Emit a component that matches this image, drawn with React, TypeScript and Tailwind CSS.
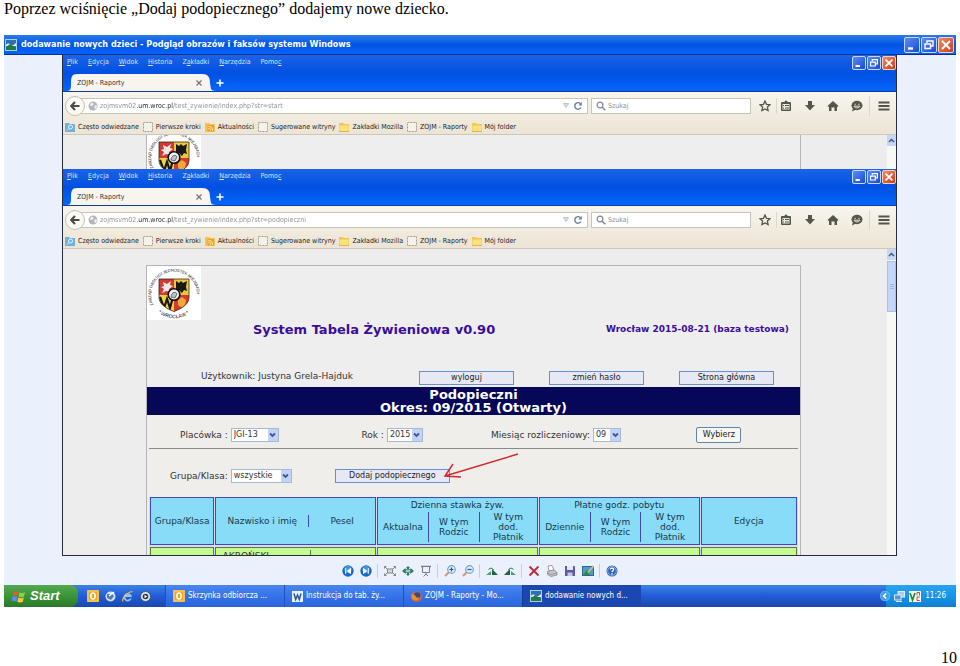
import { useId, type ReactNode } from "react";

const MENU = [
  { pre: "", key: "P", post: "lik" },
  { pre: "", key: "E", post: "dycja" },
  { pre: "", key: "W", post: "idok" },
  { pre: "", key: "H", post: "istoria" },
  { pre: "Z", key: "a", post: "kładki" },
  { pre: "", key: "N", post: "arzędzia" },
  { pre: "Pomo", key: "c", post: "" },
];

const BOOKMARKS = [
  { icon: "visited", label: "Często odwiedzane" },
  { icon: "blank", label: "Pierwsze kroki" },
  { icon: "feed", label: "Aktualności" },
  { icon: "blank", label: "Sugerowane witryny" },
  { icon: "folder", label: "Zakładki Mozilla" },
  { icon: "blank", label: "ZOJM - Raporty" },
  { icon: "folder", label: "Mój folder" },
];

/* ---------- Window controls ---------- */

function WindowButtons({ large = false }: { large?: boolean }) {
  const size = large ? "w-4 h-4" : "w-[14px] h-[14px]";
  const blue = "rounded-[2px] border border-[#c4d8fb] bg-linear-to-br from-[#5b8df5] to-[#1a49cf]";
  return (
    <div className={large ? "flex gap-px" : "flex gap-px pt-px"}>
      <button aria-label="Minimalizuj" className={`${size} ${blue}`}>
        <svg viewBox="0 0 14 14" className="block w-full h-full">
          <path d="M3 10.5h5" stroke="#fff" strokeWidth="2.4" />
        </svg>
      </button>
      <button aria-label="Przywróć" className={`${size} ${blue}`}>
        <svg viewBox="0 0 14 14" className="block w-full h-full" fill="none" stroke="#fff">
          <path d="M5 5V3h6v5H9" strokeWidth="1.4" />
          <path d="M3 6h5.5v4.5H3z" strokeWidth="1.4" />
        </svg>
      </button>
      <button
        aria-label="Zamknij"
        className={`${size} rounded-[2px] border border-[#f3d3c6] bg-linear-to-br from-[#ee8a66] to-[#cc3a12]`}
      >
        <svg viewBox="0 0 14 14" className="block w-full h-full">
          <path d="M3 3l8 8M11 3l-8 8" stroke="#fff" strokeWidth="2" />
        </svg>
      </button>
    </div>
  );
}

function PictureIcon() {
  return (
    <svg viewBox="0 0 12 12" className="w-3 h-3 shrink-0">
      <rect x="0.5" y="0.5" width="11" height="11" fill="#2f6fb0" stroke="#a9d3d8" />
      <path d="M1 6c2-3 4-1 5 0s3 0 5-2v3H1z" fill="#e9f6f4" />
      <path d="M1 8l4-3 6 4v2H1z" fill="#1f7a46" />
    </svg>
  );
}

/* ---------- Browser chrome ---------- */

function BookmarkIcon({ icon }: { icon: string }) {
  if (icon === "blank") {
    return (
      <svg viewBox="0 0 10 10" className="w-[10px] h-[10px]">
        <rect x="0.5" y="0.5" width="9" height="9" fill="#f5f2e9" stroke="#a29e90" strokeDasharray="2 1" />
      </svg>
    );
  }
  if (icon === "visited") {
    return (
      <svg viewBox="0 0 10 10" className="w-[10px] h-[10px]">
        <path d="M0 1h4l1 1h5v8H0z" fill="#6fb1de" />
        <circle cx="5.5" cy="5" r="2" fill="none" stroke="#e7f4fd" />
        <path d="M4 6.500L2 8.500" stroke="#e7f4fd" />
      </svg>
    );
  }
  if (icon === "feed") {
    return (
      <svg viewBox="0 0 10 10" className="w-[10px] h-[10px]">
        <path d="M0 1h4l1 1h5v8H0z" fill="#f3c452" />
        <rect x="2.500" y="3" width="6.500" height="6.500" fill="#f0a02c" />
        <path d="M3.500 4.500c2.500 0 4 1.500 4 4M3.500 6.500c1.200 0 2 .8 2 2" fill="none" stroke="#fff3d6" />
      </svg>
    );
  }
  return (
    <svg viewBox="0 0 10 10" className="w-[10px] h-[10px]">
      <path d="M0 1h4l1 1h5v8H0z" fill="#efc650" />
      <path d="M.5 3.500h9v6h-9z" fill="#fbe07e" />
      <path d="M0 9.600h10" stroke="#d9a93a" strokeWidth=".8" />
    </svg>
  );
}

function ToolbarIcons() {
  return (
    <div className="flex items-center text-[#55554a] mr-[6px]">
      <button aria-label="Dodaj zakładkę" className="ml-2">
        <svg viewBox="0 0 12 12" className="w-3 h-3" fill="none" stroke="currentColor" strokeWidth="1.3">
          <path d="M6 1l1.500 3.300 3.500.4-2.600 2.400.7 3.500L6 8.900l-3.100 1.700.7-3.500L1 4.700l3.500-.4z" />
        </svg>
      </button>
      <span className="w-px h-4 bg-[#dcd9cc] ml-[5px] mr-[3px]" />
      <button aria-label="Zakładki">
        <svg viewBox="0 0 12 12" className="w-3 h-3">
          <path d="M4.500 2a1.500 1.500 0 013 0H10a1 1 0 011 1V10a1 1 0 01-1 1H2a1 1 0 01-1-1V3a1 1 0 011-1z" fill="currentColor" />
          <path d="M2.500 4h7v5.500h-7z" fill="#efede2" />
          <path d="M3 5.500h1M5 5.500h4M3 8h1M5 8h4" stroke="currentColor" />
        </svg>
      </button>
      <button aria-label="Pobrane" className="ml-3">
        <svg viewBox="0 0 12 12" className="w-3 h-3">
          <path d="M4 1h4v4h3l-5 5.500L1 5h3z" fill="currentColor" />
        </svg>
      </button>
      <button aria-label="Strona startowa" className="ml-[11px]">
        <svg viewBox="0 0 12 12" className="w-3 h-3">
          <path d="M6 1l5.500 5-1 1L10 6.500V11H7.500V7.500h-3V11H2V6.500L1.500 7l-1-1z" fill="currentColor" />
        </svg>
      </button>
      <button aria-label="Czat" className="ml-3">
        <svg viewBox="0 0 12 12" className="w-3 h-3">
          <ellipse cx="6" cy="5.500" rx="5.500" ry="4.700" fill="currentColor" />
          <path d="M2 8L1 11.500 5 9.500z" fill="currentColor" />
          <path d="M3.500 4.300h1.300M7.200 4.300h1.300M3 6.200c1 2.200 5 2.200 6 0z" stroke="#efede2" strokeWidth=".9" fill="none" />
        </svg>
      </button>
      <span className="w-px h-5 bg-[#dcd9cc] ml-[6px] mr-2" />
      <button aria-label="Menu">
        <svg viewBox="0 0 12 12" className="w-3 h-3">
          <path d="M.5 2.500h11M.5 6h11M.5 9.500h11" stroke="currentColor" strokeWidth="1.900" />
        </svg>
      </button>
    </div>
  );
}

function BrowserChrome({ url }: { url: string }) {
  return (
    <div className="font-['DejaVu_Sans_Condensed','DejaVu_Sans',sans-serif] text-[7px] leading-[10px]">
      <div className="bg-linear-to-b from-[#1b63e6] via-[#0150e2] to-[#0465fb] border-b border-[#0a3fa8]">
        <div className="flex justify-between items-start h-[19px]">
          <nav className="flex gap-[10px] pl-1 pt-[2px] text-[#d4e4ff]">
            {MENU.map((m) => (
              <button key={m.pre + m.key}>
                {m.pre}
                <u>{m.key}</u>
                {m.post}
              </button>
            ))}
          </nav>
          <WindowButtons />
        </div>
        <div className="flex items-center h-[17px] pl-1">
          <div className="flex h-full">
            <svg viewBox="0 0 10 17" className="w-[10px] h-full">
              <path d="M0 17c4 0 4-3 4-8 0-6 1-9 6-9v17z" fill="#f7f5ee" />
            </svg>
            <div className="flex items-center justify-between w-[125px] bg-[#f7f5ee] text-[#333]">
              <span>ZOJM - Raporty</span>
              <button aria-label="Zamknij kartę">
                <svg viewBox="0 0 6 6" className="w-[6px] h-[6px]">
                  <path d="M.5.5l5 5M5.500.5l-5 5" stroke="#777" strokeWidth="1.300" />
                </svg>
              </button>
            </div>
            <svg viewBox="0 0 14 17" className="w-[14px] h-full">
              <path d="M14 17c-6 0-5-3-6-8 0-6-2-9-8-9v17z" fill="#f7f5ee" />
            </svg>
          </div>
          <button aria-label="Nowa karta">
            <svg viewBox="0 0 8 8" className="w-2 h-2">
              <path d="M4 .5v7M.5 4h7" stroke="#fff" strokeWidth="1.600" />
            </svg>
          </button>
        </div>
      </div>

      <div className="bg-linear-to-b from-[#f7f5ee] to-[#ece4d4] border-b border-[#cfc8b8]">
        <div className="flex items-center h-[27px] pl-[2px]">
          <button
            aria-label="Wstecz"
            className="flex items-center justify-center w-5 h-5 rounded-full border border-[#c4c0b0] bg-[#faf9f4] z-10"
          >
            <svg viewBox="0 0 10 10" className="w-[10px] h-[10px]">
              <path d="M9.500 5H1.500M5 1L1.200 5 5 9" stroke="#4c4c44" strokeWidth="2.200" fill="none" />
            </svg>
          </button>
          <div className="flex items-center grow h-4 bg-white border border-[#c9c5b6] -ml-1 pl-[6px] pr-1">
            <svg viewBox="0 0 10 10" className="w-[10px] h-[10px] shrink-0">
              <circle cx="5" cy="5" r="4.500" fill="#b3b6b9" />
              <path d="M2 3l2-1.500L6 3 4 5 2.500 5zM6 5l2.500-1 .5 2-2 2.500z" fill="#eceeef" />
            </svg>
            <input
              aria-label="Adres"
              defaultValue={url}
              className="grow min-w-0 ml-[2px] outline-none text-transparent bg-clip-text bg-[linear-gradient(90deg,#8c8c8c_37px,#222_37px,#222_73px,#8c8c8c_73px)]"
            />
            <svg viewBox="0 0 6 5" className="w-[6px] h-[5px]">
              <path d="M.5.5h5L3 4.500z" fill="#dde3ea" stroke="#b0b8c2" strokeWidth=".8" />
            </svg>
            <button aria-label="Odśwież" className="ml-1">
              <svg viewBox="0 0 10 10" className="w-[10px] h-[10px]">
                <path d="M8 6.500A3.300 3.300 0 118 3.300" fill="none" stroke="#6880a3" strokeWidth="1.400" />
                <path d="M8.800 1v3.500H5.300z" fill="#6880a3" />
              </svg>
            </button>
          </div>
          <div className="flex items-center w-[160px] h-4 bg-white border border-[#c9c5b6] ml-[3px] pl-1 shrink-0">
            <svg viewBox="0 0 10 10" className="w-[10px] h-[10px] shrink-0" fill="none" stroke="#7d8a99">
              <circle cx="4" cy="4" r="2.900" strokeWidth="1.200" />
              <path d="M6 6l3.300 3.300" strokeWidth="1.600" />
            </svg>
            <input
              aria-label="Szukaj"
              placeholder="Szukaj"
              className="grow min-w-0 ml-[2px] outline-none placeholder:text-[#8d8d8d]"
            />
          </div>
          <ToolbarIcons />
        </div>
        <div className="flex items-center h-[15px] pl-[2px] gap-1 text-[#222]">
          {BOOKMARKS.map((b) => (
            <a key={b.label} href="#" className="flex items-center gap-[3px] whitespace-nowrap">
              <BookmarkIcon icon={b.icon} />
              {b.label}
            </a>
          ))}
        </div>
      </div>
    </div>
  );
}

function Scrollbar({ thumb = false }: { thumb?: boolean }) {
  return (
    <div className="w-[9px] shrink-0 bg-[#f8f8f4]">
      <button aria-label="Przewiń w górę" className="flex items-center justify-center w-full h-[11px] bg-[#c6d5f8]">
        <svg viewBox="0 0 7 5" className="w-[7px] h-[5px]">
          <path d="M1 4l2.500-2.500L6 4" stroke="#46587f" strokeWidth="1.500" fill="none" />
        </svg>
      </button>
      {thumb && (
        <div className="flex items-center justify-center h-[51px] mt-px bg-[#c6d5fa] border border-[#a9bff0]">
          <svg viewBox="0 0 4 6" className="w-1 h-[6px]">
            <path d="M0 .5h4M0 2.500h4M0 4.500h4" stroke="#9bb2ea" />
          </svg>
        </div>
      )}
    </div>
  );
}

/* ---------- Office emblem ---------- */

function Emblem() {
  const id = useId();
  return (
    <svg viewBox="0 0 54 54" className="block w-[54px] h-[54px] bg-white">
      <defs>
        <path id={`${id}t`} d="M6.500 39A23 23 0 1 1 47.500 39" />
        <path id={`${id}b`} d="M11 46.500A25.500 25.500 0 0 0 45 45" />
        <clipPath id={`${id}s`}>
          <path d="M12 13h30v18c0 7-6 11-15 14.500C18 42 12 38 12 31z" />
        </clipPath>
      </defs>
      <g fontFamily="Liberation Sans, sans-serif" fill="#111">
        <text fontSize="4">
          <textPath href={`#${id}t`}>ZARZĄD OBSŁUGI JEDNOSTEK MIEJSKICH</textPath>
        </text>
        <text fontSize="5">
          <textPath href={`#${id}b`}>* WROCŁAW *</textPath>
        </text>
      </g>
      <g clipPath={`url(#${id}s)`}>
        <path d="M12 13h15v16H12z" fill="#cf3a36" />
        <path d="M27 13h15v16H27z" fill="#ecc93c" />
        <path d="M12 29h15v18H12z" fill="#f0d23f" />
        <path d="M27 29h15v18H27z" fill="#d5382c" />
        <path d="M15 27l2-4-3-2 3-1-1-4 4 2 4-3-1 4 3 1-4 3 1 3-4-1z" fill="#f3e6e4" />
        <path d="M29 15l3 2 2-2 2 2 4-2-1 6 1 4-3-1-2 3-3-3-3 1z" fill="#191919" />
        <path d="M13 31l4 11 3-9 3 9 3-11" fill="none" stroke="#161616" strokeWidth="2.200" />
        <path d="M31 34l4-3 4 3-1 5-3 3-4-3z" fill="#eca93a" />
        <circle cx="27" cy="28.500" r="5.800" fill="#f4f4f4" stroke="#111" strokeWidth="1.600" />
        <path d="M24 31c0-5 5-6 6-3l-2 4z" fill="#b9c0c7" stroke="#222" strokeWidth=".6" />
      </g>
      <path d="M12 13h30v18c0 7-6 11-15 14.500C18 42 12 38 12 31z" fill="none" stroke="#3a2a18" strokeWidth=".8" />
    </svg>
  );
}

/* ---------- Application page ---------- */

function Field({ label, value, width }: { label: string; value: string; width: string }) {
  const id = useId();
  return (
    <div className="flex items-center gap-[3px]">
      <label htmlFor={id} className="whitespace-nowrap">{label}</label>
      <div className="relative">
        <select
          id={id}
          className={`${width} block h-[14px] appearance-none bg-white border border-[#a5b8d6] pl-[2px] text-[8px] leading-3 font-['DejaVu_Sans',sans-serif]`}
        >
          <option>{value}</option>
        </select>
        <span className="absolute right-px top-px bottom-px w-[10px] bg-[#c3d3f8] flex items-center justify-center pointer-events-none">
          <svg viewBox="0 0 7 6" className="w-[7px] h-[6px]">
            <path d="M1 1.500L3.500 4 6 1.500" stroke="#3b5698" strokeWidth="1.800" fill="none" />
          </svg>
        </span>
      </div>
    </div>
  );
}

function FlatButton({ children, width }: { children: ReactNode; width: string }) {
  return (
    <button className={`${width} h-[14px] text-[8px] leading-3 border border-[#6a8fd0] bg-[#e6e9f3] text-[#222] whitespace-nowrap`}>
      {children}
    </button>
  );
}

const TH = "relative h-12 p-0 border border-[#3c4bb8] bg-[#89dcf8] font-normal text-[#15384c]";
const TD = "h-2 p-0 border border-b-0 border-[#5a7a3c] bg-[#c4fb91]";

function SplitHeading({ title, first }: { title: string; first: string }) {
  return (
    <div className="flex flex-col h-full">
      <span className="leading-[14px]">{title}</span>
      <div className="grid grid-cols-[32fr_32fr_36fr] grow mb-[2px] divide-x divide-[#3c4bb8] leading-[10px]">
        <span className="flex items-center justify-center">{first}</span>
        <span className="flex items-center justify-center">
          W tym
          <br />
          Rodzic
        </span>
        <span className="flex items-center justify-center">
          W tym
          <br />
          dod.
          <br />
          Płatnik
        </span>
      </div>
    </div>
  );
}

function WardsTable() {
  return (
    <table className="w-full table-fixed border-separate border-spacing-x-px border-spacing-y-0 bg-[#d9d9f5] text-center">
      <colgroup>
        <col className="w-[10%]" />
        <col className="w-[25%]" />
        <col className="w-[25%]" />
        <col className="w-[25%]" />
        <col className="w-[15%]" />
      </colgroup>
      <thead>
        <tr>
          <th className={TH}>Grupa/Klasa</th>
          <th className={TH}>
            <div className="grid grid-cols-[93fr_66fr] divide-x divide-[#3c4bb8] leading-3">
              <span>Nazwisko i imię</span>
              <span>Pesel</span>
            </div>
          </th>
          <th className={TH}>
            <SplitHeading title="Dzienna stawka żyw." first="Aktualna" />
          </th>
          <th className={TH}>
            <SplitHeading title="Płatne godz. pobytu" first="Dziennie" />
          </th>
          <th className={TH}>Edycja</th>
        </tr>
      </thead>
      <tbody>
        <tr>
          <td colSpan={5} className="h-[2px] p-0" />
        </tr>
        <tr>
          <td className={TD} />
          <td className={TD}>
            <div className="flex h-[7px] overflow-hidden">
              <span className="w-[95px] leading-[12px] border-r border-[#5a7a3c] pr-[35px] mt-[2px]">AKROŃSKI</span>
            </div>
          </td>
          <td className={TD} />
          <td className={TD} />
          <td className={TD} />
        </tr>
      </tbody>
    </table>
  );
}

function ApplicationPage() {
  return (
    <div className="flex bg-[#ededed] text-[9px] leading-[10px] text-[#333] font-['DejaVu_Sans',Verdana,sans-serif]">
      <div className="grow pt-4 pl-[83px] pr-[86px]">
        <div className="border border-b-0 border-[#b4b4b4] bg-[#eeeeee]">
          <Emblem />
          <div className="flex justify-between pl-[106px] pr-[11px] text-[#3a0d9c] font-bold">
            <h1 className="text-[13px] leading-5">System Tabela Żywieniowa v0.90</h1>
            <p className="text-[9px] leading-[18px]">Wrocław 2015-08-21 (baza testowa)</p>
          </div>
          <div className="flex justify-between pl-[54px] pr-[26px] pt-[31px] pb-[2px]">
            <span>Użytkownik: Justyna Grela-Hajduk</span>
            <div className="flex gap-[35px]">
              <FlatButton width="w-[95px]">wyloguj</FlatButton>
              <FlatButton width="w-[95px]">zmień hasło</FlatButton>
              <FlatButton width="w-[95px]">Strona główna</FlatButton>
            </div>
          </div>
          <h2 className="bg-[#070757] text-white text-center font-bold text-[13px] leading-[13px] py-px">
            Podopieczni
            <br />
            Okres: 09/2015 (Otwarty)
          </h2>
          <div className="bg-[#f0eeea] px-[2px]">
            <div className="grid grid-cols-[182fr_130fr_206fr_102fr] items-center pl-[31px] pt-[12px] pb-[5px] border-b border-[#8a8a8a]">
              <Field label="Placówka :" value="JGI-13" width="w-12" />
              <Field label="Rok :" value="2015" width="w-9" />
              <Field label="Miesiąc rozliczeniowy:" value="09" width="w-7" />
              <div>
                <button className="w-[45px] h-4 text-[8px] leading-3 border border-[#5f86ac] rounded-[2px] bg-[#f7f6f1] text-[#222]">
                  Wybierz
                </button>
              </div>
            </div>
            <div className="flex items-center gap-[43px] pl-[21px] pt-5 pb-[14px]">
              <Field label="Grupa/Klasa:" value="wszystkie" width="w-[61px]" />
              <div className="relative">
                <FlatButton width="w-[115px]">Dodaj podopiecznego</FlatButton>
                <svg
                  viewBox="0 0 80 34"
                  className="absolute left-[106px] -top-[19px] w-20 h-[34px] pointer-events-none"
                  fill="none"
                  stroke="#d02a30"
                  strokeWidth="1.500"
                >
                  <path d="M77 4L4 26M12 14L4 26L20 27" />
                </svg>
              </div>
            </div>
            <WardsTable />
          </div>
        </div>
      </div>
      <Scrollbar thumb />
    </div>
  );
}

/* ---------- Picture viewer toolbar ---------- */

function NavIcon({ back = false }: { back?: boolean }) {
  return (
    <svg viewBox="0 0 12 12" className="w-3 h-3">
      <circle cx="6" cy="6" r="5.700" fill="#1668c0" />
      <circle cx="6" cy="4.500" r="3.800" fill="#3f93de" />
      <path
        d={back ? "M3.700 3.200v5.600M8.500 3.500v5L5.300 6z" : "M8.300 3.200v5.600M3.500 3.500v5L6.700 6z"}
        fill="#fff"
        stroke="#fff"
        strokeWidth="1"
      />
    </svg>
  );
}

function ZoomIcon({ plus = false }: { plus?: boolean }) {
  return (
    <svg viewBox="0 0 12 12" className="w-3 h-3">
      <path d="M5 7L1 11" stroke="#d09a70" strokeWidth="2" />
      <circle cx="7.500" cy="4.500" r="3.800" fill="#dcecfb" stroke="#7ba0cf" strokeWidth="1.200" />
      <path d={plus ? "M5.500 4.500h4M7.500 2.500v4" : "M5.500 4.500h4"} stroke="#31579b" strokeWidth="1.200" />
    </svg>
  );
}

function ViewerButton({ label, children }: { label: string; children: ReactNode }) {
  return (
    <button aria-label={label} className="flex items-center justify-center w-[18px] h-4">
      {children}
    </button>
  );
}

function Divider() {
  return <span className="w-px h-[14px] bg-[#c9cddb] ml-[2px] mr-[3px]" />;
}

function ViewerToolbar() {
  return (
    <div className="flex items-center justify-center h-[29px]">
      <ViewerButton label="Poprzedni obraz"><NavIcon back /></ViewerButton>
      <ViewerButton label="Następny obraz"><NavIcon /></ViewerButton>
      <Divider />
      <ViewerButton label="Dopasuj">
        <svg viewBox="0 0 12 12" className="w-3 h-3" stroke="#858585" fill="none">
          <rect x="3.500" y="4" width="5" height="4" fill="#d8d8d8" />
          <path d="M.5 1.500L3 4M11.500 1.500L9 4M.5 10.500L3 8M11.500 10.500L9 8M.5 3.500v-2h2M11.500 3.500v-2h-2M.5 8.500v2h2M11.500 8.500v2h-2" />
        </svg>
      </ViewerButton>
      <ViewerButton label="Rzeczywisty rozmiar">
        <svg viewBox="0 0 12 12" className="w-3 h-3">
          <path d="M0 6l3.500-3v1.500H5V3H4l2-2 2 2H7v1.500h1.500V3L12 6 8.500 9V7.500H7V9h1l-2 2-2-2h1V7.500H3.500V9z" fill="#2f7d55" />
          <rect x="3.500" y="4.300" width="5" height="3.400" fill="#9cc8e4" stroke="#3c6f74" strokeWidth=".6" />
        </svg>
      </ViewerButton>
      <ViewerButton label="Pokaz slajdów">
        <svg viewBox="0 0 12 12" className="w-3 h-3" fill="none" stroke="#77779a">
          <path d="M1 1.500h10" strokeWidth="1.500" />
          <path d="M2.500 2v5.500h7V2" fill="#eef0fa" />
          <path d="M6 7.500V9M3.500 11.500L6 9l2 2" />
        </svg>
      </ViewerButton>
      <Divider />
      <ViewerButton label="Powiększ"><ZoomIcon plus /></ViewerButton>
      <ViewerButton label="Pomniejsz"><ZoomIcon /></ViewerButton>
      <Divider />
      <ViewerButton label="Obróć w prawo">
        <svg viewBox="0 0 12 12" className="w-3 h-3">
          <path d="M0 10l5-4v4z" fill="#4f9c74" />
          <path d="M6 10V4l6 6z" fill="#17683a" />
          <path d="M2.500 4.500c2-2 4-1.500 5 .5" fill="none" stroke="#17683a" />
        </svg>
      </ViewerButton>
      <ViewerButton label="Obróć w lewo">
        <svg viewBox="0 0 12 12" className="w-3 h-3">
          <path d="M12 10L7 6v4z" fill="#4f9c74" />
          <path d="M6 10V4l-6 6z" fill="#17683a" />
          <path d="M9.500 4.500c-2-2-4-1.500-5 .5" fill="none" stroke="#17683a" />
        </svg>
      </ViewerButton>
      <Divider />
      <ViewerButton label="Usuń">
        <svg viewBox="0 0 12 12" className="w-3 h-3">
          <path d="M1.500 1.500l9 9M10.500 1.500l-9 9" stroke="#c0273c" strokeWidth="1.800" />
        </svg>
      </ViewerButton>
      <ViewerButton label="Drukuj">
        <svg viewBox="0 0 12 12" className="w-3 h-3" stroke="#85858d" strokeWidth=".8">
          <path d="M3 6L2 1l4-.5L8 5z" fill="#fff" />
          <path d="M1.500 6.500L8 5l3 2.500v2.500L5 11.500l-3.500-2z" fill="#c8c8cc" />
          <path d="M2 8l3 1.500 6-1.500" fill="none" />
        </svg>
      </ViewerButton>
      <ViewerButton label="Zapisz">
        <svg viewBox="0 0 12 12" className="w-3 h-3">
          <path d="M1 1h9.500l.5.5V11H1z" fill="#5a5aa0" />
          <path d="M3 1h6v4H3z" fill="#e6e8f4" />
          <path d="M3.500 7.500h5V11h-5z" fill="#c4c7e0" />
        </svg>
      </ViewerButton>
      <ViewerButton label="Edytuj">
        <svg viewBox="0 0 12 12" className="w-3 h-3">
          <rect x=".5" y="1.500" width="11" height="9" fill="#4c9bd8" stroke="#31668f" />
          <path d="M1 10l4-5 3 5z" fill="#2f8a3e" />
          <path d="M11.500 1L6 7.500" stroke="#d9c260" strokeWidth="1.600" />
        </svg>
      </ViewerButton>
      <Divider />
      <ViewerButton label="Pomoc">
        <svg viewBox="0 0 12 12" className="w-3 h-3">
          <circle cx="6" cy="6" r="5.500" fill="#2f62b4" />
          <circle cx="6" cy="6" r="4.300" fill="none" stroke="#b7cdf0" strokeWidth=".7" />
          <path d="M4.300 4.500C4.500 2.500 7.800 2.600 7.600 4.600 7.500 5.600 6 5.800 6 7.200M6 8.200v1.300" fill="none" stroke="#fff" strokeWidth="1.300" />
        </svg>
      </ViewerButton>
    </div>
  );
}

/* ---------- Taskbar ---------- */

function OutlookIcon() {
  return (
    <svg viewBox="0 0 12 12" className="w-3 h-3 shrink-0">
      <rect width="12" height="12" fill="#f2a51e" />
      <rect x="1" y="1" width="10" height="10" fill="none" stroke="#fbe0a0" strokeWidth=".8" />
      <ellipse cx="6" cy="6" rx="2.200" ry="3" fill="none" stroke="#fff" strokeWidth="1.500" />
    </svg>
  );
}

function TaskButton({ icon, label, active = false }: { icon: ReactNode; label: string; active?: boolean }) {
  return (
    <button
      className={`flex items-center gap-[3px] w-[119px] h-full pl-[7px] whitespace-nowrap border-l ${
        active ? "bg-[#1b48b0] border-[#143a92]" : "bg-linear-to-b from-[#4a86ee] via-[#3474e8] to-[#2c64da] border-[#2350b8]"
      }`}
    >
      {icon}
      {label}
    </button>
  );
}

function Taskbar() {
  return (
    <div className="flex h-[22px] bg-linear-to-b from-[#3d83e2] via-[#225bd8] to-[#1c48ae] text-white text-[8px] leading-[10px] font-['DejaVu_Sans_Condensed','DejaVu_Sans',sans-serif]">
      <button className="flex items-center gap-1 w-[74px] pl-2 rounded-r-lg bg-linear-to-b from-[#55a850] via-[#3b9438] to-[#2b772b] text-[13px] font-bold italic font-['Liberation_Sans',Arial,sans-serif]">
        <svg viewBox="0 0 14 13" className="w-[14px] h-[13px]">
          <path d="M1.500 2c2-1.200 3.500-1 5 0L5.500 6c-1.500-1-3-1-5 0z" fill="#e65a2c" />
          <path d="M7.500 2.300c1.500 1 3.500 1 5.500 0L12 6.500c-2 1-4 1-5.500 0z" fill="#8fd04a" />
          <path d="M.3 7c2-1 3.500-1 5 0l-1 4.500c-1.500-1-3-1-5 0z" fill="#5b8ff2" />
          <path d="M6.300 7.500c1.500 1 3.500 1 5.500 0l-1 4.300c-2 1-4 1-5.500 0z" fill="#f6cb3b" />
        </svg>
        Start
      </button>
      <div className="flex items-center gap-[6px] pl-[9px] w-[87px]">
        <button aria-label="Outlook"><OutlookIcon /></button>
        <button aria-label="Pulpit">
          <svg viewBox="0 0 11 11" className="w-[11px] h-[11px]">
            <circle cx="5.500" cy="5.500" r="5" fill="#cfe0f0" />
            <path d="M2 3h5l2 2-3 4-4-2z" fill="#4b7fae" />
            <path d="M4 5l5-4" stroke="#fff" strokeWidth="1.500" />
          </svg>
        </button>
        <button aria-label="Internet Explorer">
          <svg viewBox="0 0 11 11" className="w-[11px] h-[11px]" fill="none">
            <path d="M8.800 7.500A3.300 3.300 0 118.800 5H3.500" stroke="#8cc7fa" strokeWidth="1.800" />
            <path d="M1 10.500C-1 8 7-.5 10.500 1" stroke="#eec14b" strokeWidth="1.100" />
          </svg>
        </button>
        <button aria-label="Odtwarzacz" className="ml-px">
          <svg viewBox="0 0 11 11" className="w-[11px] h-[11px]">
            <circle cx="5.500" cy="5.500" r="5" fill="#e3e6ea" stroke="#33435f" strokeWidth=".8" />
            <circle cx="5.500" cy="5.500" r="2.800" fill="#27344f" />
            <path d="M4.500 3.800L7.300 5.500 4.500 7.200z" fill="#fff" />
          </svg>
        </button>
      </div>
      <TaskButton icon={<OutlookIcon />} label="Skrzynka odbiorcza ..." />
      <TaskButton
        icon={
          <svg viewBox="0 0 11 11" className="w-[11px] h-[11px] shrink-0">
            <rect width="11" height="11" fill="#e8f1fa" />
            <path d="M2 2.500l1.700 6L5.500 4l1.800 4.500L9 2.500" fill="none" stroke="#28589c" strokeWidth="1.500" />
          </svg>
        }
        label="Instrukcja do tab. ży..."
      />
      <TaskButton
        icon={
          <svg viewBox="0 0 11 11" className="w-[11px] h-[11px] shrink-0">
            <circle cx="5.500" cy="5.500" r="5.300" fill="#e0662a" />
            <circle cx="6.200" cy="4.500" r="3.300" fill="#2d4f94" />
            <path d="M.5 3c1 1 3 0 4 2s2 2 4 1c-1 4-6 4.500-8 1z" fill="#f18a2f" />
          </svg>
        }
        label="ZOJM - Raporty - Mo..."
      />
      <TaskButton active icon={<PictureIcon />} label="dodawanie nowych d..." />
      <div className="flex items-center gap-1 ml-auto pr-[10px] bg-linear-to-b from-[#2ba4ef] via-[#1495ea] to-[#0f7fd0]">
        <button aria-label="Pokaż ukryte ikony" className="-ml-[6px]">
          <svg viewBox="0 0 10 10" className="w-[10px] h-[10px]">
            <circle cx="5" cy="5" r="4.800" fill="#3fa0ea" stroke="#9ed2fa" strokeWidth=".6" />
            <path d="M6.200 2.500L3.700 5l2.500 2.500" fill="none" stroke="#fff" strokeWidth="1.600" />
          </svg>
        </button>
        <svg viewBox="0 0 11 11" className="w-[11px] h-[11px]">
          <rect x="4" y=".5" width="6.500" height="5.500" fill="#a9cdf0" stroke="#e4eef8" />
          <rect x=".5" y="4" width="6.500" height="5" fill="#5b92c9" stroke="#dbe7f3" />
          <path d="M2 10.500h6" stroke="#dbe7f3" />
        </svg>
        <svg viewBox="0 0 12 11" className="w-3 h-[11px]">
          <rect width="12" height="11" fill="#f6fbf4" />
          <path d="M1 2l2.500 7L6 2" fill="none" stroke="#1c8a35" strokeWidth="1.700" />
          <path d="M8 4.500V1.500h2.500v3M10.800 6H8v3.500h2.800" fill="none" stroke="#c04a3a" />
        </svg>
        <time>11:26</time>
      </div>
    </div>
  );
}

export default function App() {
  return (
    <main className="bg-white text-black pl-1 font-['Liberation_Serif','Times_New_Roman',serif] text-[16px]">
      <p className="leading-[18px] pb-[17px]">Poprzez wciśnięcie „Dodaj podopiecznego” dodajemy nowe dziecko.</p>

      <section className="mr-1 bg-[#ebf1fc]">
        <header className="flex items-center justify-between h-5 pl-px pr-[2px] bg-linear-to-b from-[#2a7bea] via-[#0355e4] to-[#0563fb] border-b border-[#0a2f86]">
          <div className="flex items-center gap-1 text-white text-[9px] font-bold font-['DejaVu_Sans_Condensed','DejaVu_Sans',sans-serif]">
            <PictureIcon />
            <span>dodawanie nowych dzieci - Podgląd obrazów i faksów systemu Windows</span>
          </div>
          <WindowButtons large />
        </header>

        <div className="ml-[58px] mr-[59px] border border-t-0 border-[#2a2a3a]">
          <BrowserChrome url="zojmsvm02.um.wroc.pl/test_zywienie/index.php?str=start" />
          <div className="flex h-[34px] bg-[#ededed] overflow-hidden">
            <div className="grow pl-[83px] pr-[86px]">
              <div className="h-full border-x border-[#b4b4b4] bg-[#eeeeee] overflow-hidden">
                <div className="-mt-[6px]">
                  <Emblem />
                </div>
              </div>
            </div>
            <Scrollbar />
          </div>
          <BrowserChrome url="zojmsvm02.um.wroc.pl/test_zywienie/index.php?str=podopieczni" />
          <ApplicationPage />
        </div>

        <ViewerToolbar />
        <Taskbar />
      </section>

      <p className="text-right leading-4 pt-[43px] pr-[3px]">10</p>
    </main>
  );
}
